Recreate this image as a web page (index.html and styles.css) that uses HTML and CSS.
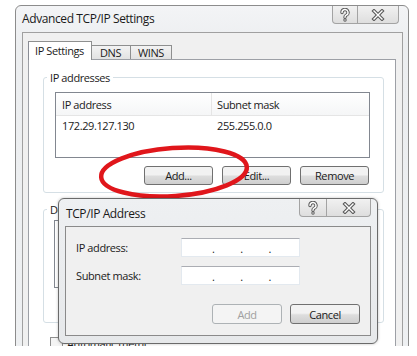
FILE: index.html
```html
<!DOCTYPE html>
<html lang="en">
<head>
  <meta charset="UTF-8" />
  <title>Advanced TCP/IP Settings</title>
  <link rel="stylesheet" href="styles.css">
</head>
<body>
  <div class="screen">
    <div class="win">
      <div class="titlebar">
        <span class="caption">Advanced TCP/IP Settings</span>
        <div class="caption-btns">
          <span class="cbtn help">
            <svg width="12" height="14" viewBox="0 0 12 14">
              <path d="M3,4.5 a3,3 0 1 1 4.2,2.7 q-1.2,0.6 -1.2,2" fill="none" stroke="#5a5a5a" stroke-width="3.4" stroke-linecap="round"/>
              <path d="M3,4.5 a3,3 0 1 1 4.2,2.7 q-1.2,0.6 -1.2,2" fill="none" stroke="#fff" stroke-width="1.4" stroke-linecap="round"/>
              <circle cx="6" cy="12" r="1.7" fill="#5a5a5a"/>
              <circle cx="6" cy="12" r="0.7" fill="#fff"/>
            </svg>
          </span>
          <span class="cbtn close">
            <svg width="14" height="12" viewBox="0 0 14 12">
              <path d="M3,2 L11,10 M11,2 L3,10" stroke="#5a5a5a" stroke-width="3.6" stroke-linecap="square"/>
              <path d="M3,2 L11,10 M11,2 L3,10" stroke="#fff" stroke-width="1.4" stroke-linecap="square"/>
            </svg>
          </span>
        </div>
      </div>

      <div class="client">
        <div class="tabs">
          <span class="tab active">IP Settings</span>
          <span class="tab dns">DNS</span>
          <span class="tab">WINS</span>
        </div>

        <div class="panel">
          <fieldset class="group">
            <legend>IP addresses</legend>
            <div class="listview">
              <div class="lv-head">
                <span class="col1">IP address</span>
                <span class="col2">Subnet mask</span>
              </div>
              <div class="lv-row">
                <span class="col1">172.29.127.130</span>
                <span class="col2">255.255.0.0</span>
              </div>
            </div>
            <div class="btn-row">
              <button class="btn">Add...</button>
              <button class="btn">Edit...</button>
              <button class="btn">Remove</button>
            </div>
          </fieldset>

          <fieldset class="group gateways">
            <legend>Default gateways:</legend>
            <div class="listview short"></div>
          </fieldset>

          <label class="check"><span class="box"></span>Automatic metric</label>
        </div>
      </div>
    </div>

    <svg class="highlight" width="417" height="356" viewBox="0 0 417 356">
      <ellipse cx="174" cy="172" rx="73" ry="24" transform="rotate(-4 174 172)" fill="none" stroke="#e0161b" stroke-width="4.5"/>
    </svg>

    <div class="dialog">
      <div class="titlebar small">
        <span class="caption">TCP/IP Address</span>
        <div class="caption-btns">
          <span class="cbtn help">
            <svg width="12" height="14" viewBox="0 0 12 14">
              <path d="M3,4.5 a3,3 0 1 1 4.2,2.7 q-1.2,0.6 -1.2,2" fill="none" stroke="#5a5a5a" stroke-width="3.4" stroke-linecap="round"/>
              <path d="M3,4.5 a3,3 0 1 1 4.2,2.7 q-1.2,0.6 -1.2,2" fill="none" stroke="#fff" stroke-width="1.4" stroke-linecap="round"/>
              <circle cx="6" cy="12" r="1.7" fill="#5a5a5a"/>
              <circle cx="6" cy="12" r="0.7" fill="#fff"/>
            </svg>
          </span>
          <span class="cbtn close">
            <svg width="14" height="12" viewBox="0 0 14 12">
              <path d="M3,2 L11,10 M11,2 L3,10" stroke="#5a5a5a" stroke-width="3.6" stroke-linecap="square"/>
              <path d="M3,2 L11,10 M11,2 L3,10" stroke="#fff" stroke-width="1.4" stroke-linecap="square"/>
            </svg>
          </span>
        </div>
      </div>
      <div class="dlg-client">
        <div class="field">
          <span class="label">IP address:</span>
          <div class="ipbox"><span>.</span><span>.</span><span>.</span></div>
        </div>
        <div class="field">
          <span class="label">Subnet mask:</span>
          <div class="ipbox"><span>.</span><span>.</span><span>.</span></div>
        </div>
        <div class="dlg-buttons">
          <button class="btn disabled">Add</button>
          <button class="btn">Cancel</button>
        </div>
      </div>
    </div>
  </div>
</body>
</html>
```

FILE: styles.css
```css
body {
  margin: 0;
  background: #fff;
  font-family: 'Open Sans', 'Noto Sans', sans-serif;
  font-size: 11px;
  letter-spacing: -0.4px;
  color: #1a1a1a;
}

.screen {
  position: relative;
  width: 417px;
  height: 346px;
  overflow: hidden;
}

/* outer window */
.win {
  box-sizing: border-box;
  margin: 5px 0 0 15px;
  width: 394px;
  height: 360px;
  border: 1px solid #8c8c8c;
  border-radius: 6px 6px 0 0;
  background: linear-gradient(180deg, #f3f4f6, #eceef0 40px, #eef0f2);
  display: flex;
  flex-direction: column;
}

.titlebar {
  display: flex;
  justify-content: space-between;
  height: 26px;
  flex-shrink: 0;
}

.titlebar .caption {
  padding: 4px 0 0 6px;
  font-size: 12px;
}

.caption-btns {
  display: flex;
  margin-right: 9px;
  height: 18px;
}

.cbtn {
  display: flex;
  align-items: center;
  justify-content: center;
  height: 17px;
  border: 1px solid #a3a3a3;
  border-top: none;
  background: linear-gradient(180deg, #f1f1f1, #dedede);
}

.cbtn.help {
  width: 24px;
  border-radius: 0 0 0 4px;
}

.cbtn.close {
  width: 40px;
  border-left: none;
  border-radius: 0 0 4px 0;
}

.client {
  flex: 1;
  margin: 0 5px 0 6px;
  border: 1px solid #a0a0a0;
  background: #f0f0f0;
}

/* tabs */
.tabs {
  display: flex;
  align-items: flex-end;
  height: 18px;
  margin: 8px 0 0 5px;
}

.tab {
  box-sizing: border-box;
  height: 14px;
  padding: 0 7px;
  border: 1px solid #8e8f8f;
  border-bottom: none;
  border-left: none;
  background: linear-gradient(180deg, #f3f3f3, #e2e2e2);
  line-height: 13px;
}

.tab.dns {
  padding: 0 9px 0 8px;
}

.tab.active {
  position: relative;
  height: 19px;
  margin-bottom: -1px;
  padding: 0 7px 0 6px;
  border-left: 1px solid #898c95;
  background: #fff;
  line-height: 17px;
  z-index: 1;
}

.panel {
  box-sizing: border-box;
  margin: 0 6px 0 5px;
  height: 300px;
  border: 1px solid #9da0a6;
  background: #fff;
  padding-top: 10px;
}

/* group boxes */
.group {
  margin: 0 11px 0 14px;
  padding: 0 0 7px;
  border: 1px solid #d5dfe5;
  border-radius: 3px;
}

.group legend {
  margin-left: 3px;
  padding: 0 3px;
  font-size: 11px;
}

.listview {
  box-sizing: border-box;
  margin: 7px 13px 0 11px;
  height: 66px;
  border: 1px solid #828790;
  background: #fff;
}

.lv-head {
  display: flex;
  height: 22px;
  border-bottom: 1px solid #e5e5e5;
  background: linear-gradient(180deg, #fff, #f5f6f7);
  line-height: 24px;
}

.lv-head .col1 {
  border-right: 1px solid #e5e5e5;
}

.lv-row {
  display: flex;
  line-height: 20px;
}

.col1 {
  box-sizing: border-box;
  width: 156px;
  padding-left: 6px;
}

.col2 {
  padding-left: 5px;
}

.btn-row {
  display: flex;
  justify-content: flex-end;
  gap: 9px;
  margin: 8px 14px 0 0;
}

.btn {
  box-sizing: border-box;
  width: 69px;
  height: 19px;
  padding: 0;
  border: 1px solid #707070;
  border-radius: 3px;
  background: linear-gradient(180deg, #f2f2f2 45%, #dddddd 55%, #cfcfcf);
  font-family: inherit;
  font-size: 11px;
  letter-spacing: inherit;
  color: #1a1a1a;
}

.btn.disabled {
  border-color: #adb2b5;
  background: #f4f4f4;
  color: #a0a0a0;
}

.gateways {
  margin-top: 9px;
  height: 121px;
  box-sizing: border-box;
}

.listview.short {
  margin: 3px 20px 0 10px;
  height: 68px;
}

.check {
  display: flex;
  align-items: center;
  gap: 4px;
  margin: 13px 0 0 21px;
}

.box {
  width: 11px;
  height: 11px;
  border: 1px solid #8f8f8f;
  background: #f4f4f4;
}

/* red annotation */
.highlight {
  position: absolute;
  left: 0;
  top: 0;
  pointer-events: none;
}

/* TCP/IP Address dialog, floating over the settings window */
.dialog {
  position: absolute;
  left: 58px;
  top: 198px;
  box-sizing: border-box;
  width: 320px;
  height: 146px;
  border: 1px solid #6a6a6a;
  border-radius: 6px;
  background: linear-gradient(180deg, #eef0f2, #e6e8ea);
  box-shadow: 0 0 3px rgba(0, 0, 0, 0.25);
  display: flex;
  flex-direction: column;
}

.titlebar.small {
  height: 27px;
}

.titlebar.small .caption {
  padding: 6px 0 0 7px;
}

.dialog .caption-btns {
  margin-right: 6px;
}

.dialog .cbtn.help {
  width: 26px;
}

.dialog .cbtn.close {
  width: 43px;
}

.dlg-client {
  flex: 1;
  margin: 0 6px 7px 6px;
  border: 1px solid #8a8a8a;
  background: #f0f0f0;
  padding: 11px 0 0 10px;
}

.field {
  display: flex;
  align-items: center;
  margin-bottom: 9px;
}

.label {
  width: 105px;
  font-size: 11px;
}

.ipbox {
  box-sizing: border-box;
  display: flex;
  justify-content: space-between;
  width: 119px;
  height: 19px;
  padding: 0 28px 0 30px;
  border: 1px solid #e3e9ef;
  border-top-color: #abadb3;
  background: #fff;
  line-height: 19px;
  font-size: 11px;
}

.dlg-buttons {
  display: flex;
  justify-content: flex-end;
  gap: 8px;
  margin: 19px 10px 0 0;
}

.dlg-buttons .btn {
  width: 70px;
  height: 20px;
}
```
